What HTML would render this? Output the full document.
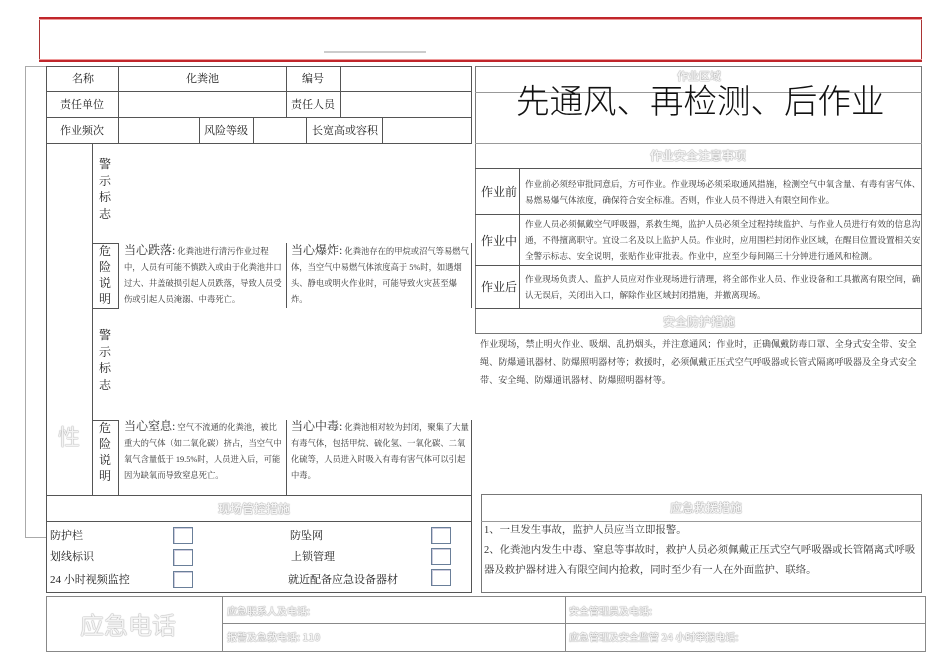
<!DOCTYPE html><html><head><meta charset="utf-8"><style>
*{margin:0;padding:0;box-sizing:border-box}
body{width:950px;height:672px;background:#fff;position:relative;overflow:hidden;font-family:"Liberation Serif","Noto Serif CJK SC",serif;color:#222}
.a{position:absolute}
.b{position:absolute;border:1px solid #555}
.h{position:absolute;background:#555;height:1px}
.v{position:absolute;background:#555;width:1px}
.t{position:absolute;font-size:11px;white-space:nowrap}
.em{position:absolute;color:#f4f4f4;text-shadow:0 0 1px #888,0 0 1px #aaa;font-family:"Noto Sans CJK SC",sans-serif;font-weight:bold;white-space:nowrap;font-size:12px}
.s{font-size:8.3px;line-height:16px;position:absolute;color:#333}
.cb{position:absolute;width:20px;height:17px;border:1px solid #6a7f99;box-shadow:inset 1px 1px 0 #ccd}
</style></head><body>
<div class="a" style="left:39px;top:17px;width:883px;height:45px;border-top:2px solid #c0262b;border-bottom:2px solid #c0262b;border-left:1px solid #a33;border-right:1px solid #a33"></div>
<div class="a" style="left:39px;top:19px;width:883px;height:1px;background:#e99"></div>
<div class="a" style="left:39px;top:59px;width:883px;height:1px;background:#e99"></div>
<div class="a" style="left:324px;top:51px;width:102px;height:2px;background:#ccc"></div>
<div class="a" style="left:25px;top:66px;width:21px;height:472px;border:1px solid #aaa;border-right:none"></div>
<div class="b" style="left:46px;top:66px;width:426px;height:78px"></div>
<div class="h" style="left:46px;top:91px;width:426px"></div>
<div class="h" style="left:46px;top:117px;width:426px"></div>
<div class="v" style="left:118px;top:66px;height:77px"></div>
<div class="v" style="left:286px;top:66px;height:51px"></div>
<div class="v" style="left:340px;top:66px;height:51px"></div>
<div class="v" style="left:199px;top:117px;height:26px"></div>
<div class="v" style="left:253px;top:117px;height:26px"></div>
<div class="v" style="left:306px;top:117px;height:26px"></div>
<div class="v" style="left:382px;top:117px;height:26px"></div>
<div class="t" style="left:72px;top:70px">名称</div>
<div class="t" style="left:186px;top:70px">化粪池</div>
<div class="t" style="left:302px;top:70px">编号</div>
<div class="t" style="left:60px;top:96px">责任单位</div>
<div class="t" style="left:291px;top:96px">责任人员</div>
<div class="t" style="left:60px;top:122px">作业频次</div>
<div class="t" style="left:204px;top:122px">风险等级</div>
<div class="t" style="left:312px;top:122px">长宽高或容积</div>
<div class="v" style="left:46px;top:143px;height:353px"></div>
<div class="v" style="left:92px;top:143px;height:353px"></div>
<div class="v" style="left:471px;top:243px;height:65px"></div>
<div class="v" style="left:471px;top:420px;height:76px"></div>
<div class="t" style="left:99px;top:156px;font-size:12px;line-height:16.5px;white-space:normal;width:14px">警示标志</div>
<div class="b" style="left:92px;top:243px;width:27px;height:66px"></div>
<div class="t" style="left:99px;top:243px;font-size:12px;line-height:16px;white-space:normal;width:14px">危险说明</div>
<div class="v" style="left:286px;top:243px;height:65px"></div>
<div class="s" style="left:124px;top:242px;width:160px"><span style="font-size:12px">当心跌落:</span> 化粪池进行清污作业过程中，人员有可能不慎跌入或由于化粪池井口过大、井盖破损引起人员跌落，导致人员受伤或引起人员淹溺、中毒死亡。</div>
<div class="s" style="left:291px;top:242px;width:178px"><span style="font-size:12px">当心爆炸:</span> 化粪池存在的甲烷或沼气等易燃气体，当空气中易燃气体浓度高于 5%时，如遇烟头、静电或明火作业时，可能导致火灾甚至爆炸。</div>
<div class="t" style="left:99px;top:327px;font-size:12px;line-height:16.5px;white-space:normal;width:14px">警示标志</div>
<div class="b" style="left:92px;top:420px;width:27px;height:76px"></div>
<div class="t" style="left:99px;top:420px;font-size:12px;line-height:16px;white-space:normal;width:14px">危险说明</div>
<div class="v" style="left:286px;top:420px;height:76px"></div>
<div class="s" style="left:124px;top:418px;width:160px"><span style="font-size:12px">当心窒息:</span> 空气不流通的化粪池，被比重大的气体（如二氧化碳）挤占，当空气中氧气含量低于 19.5%时，人员进入后，可能因为缺氧而导致窒息死亡。</div>
<div class="s" style="left:291px;top:418px;width:178px"><span style="font-size:12px">当心中毒:</span> 化粪池相对较为封闭，聚集了大量有毒气体，包括甲烷、硫化氢、一氧化碳、二氧化硫等，人员进入时吸入有毒有害气体可以引起中毒。</div>
<div class="em" style="left:58px;top:420px;font-size:22px;font-weight:normal">性</div>
<div class="b" style="left:46px;top:495px;width:426px;height:98px"></div>
<div class="h" style="left:46px;top:521px;width:426px"></div>
<div class="em" style="left:218px;top:500px">现场管控措施</div>
<div class="t" style="left:50px;top:527px">防护栏</div>
<div class="t" style="left:50px;top:548px">划线标识</div>
<div class="t" style="left:50px;top:571px">24 小时视频监控</div>
<div class="t" style="left:290px;top:527px">防坠网</div>
<div class="t" style="left:291px;top:548px">上锁管理</div>
<div class="t" style="left:288px;top:571px">就近配备应急设备器材</div>
<div class="cb" style="left:173px;top:527px"></div>
<div class="cb" style="left:173px;top:549px"></div>
<div class="cb" style="left:173px;top:571px"></div>
<div class="cb" style="left:431px;top:527px"></div>
<div class="cb" style="left:431px;top:548px"></div>
<div class="cb" style="left:431px;top:569px"></div>
<div class="b" style="left:475px;top:66px;width:447px;height:268px;border-color:#777"></div>
<div class="h" style="left:475px;top:92px;width:447px;background:#999"></div>
<div class="h" style="left:475px;top:143px;width:447px;background:#999"></div>
<div class="h" style="left:475px;top:168px;width:447px"></div>
<div class="h" style="left:475px;top:214px;width:447px"></div>
<div class="h" style="left:475px;top:265px;width:447px"></div>
<div class="h" style="left:475px;top:308px;width:447px"></div>
<div class="v" style="left:519px;top:168px;height:140px"></div>
<div class="em" style="left:677px;top:68px;font-size:11px">作业区域</div>
<div class="t" style="left:516px;top:74px;font-size:33.5px;font-family:'Noto Sans CJK SC',sans-serif;font-weight:300;color:#111">先通风、再检测、后作业</div>
<div class="em" style="left:650px;top:147px">作业安全注意事项</div>
<div class="t" style="left:481px;top:183px;font-size:12px">作业前</div>
<div class="t" style="left:481px;top:232px;font-size:12px">作业中</div>
<div class="t" style="left:481px;top:278px;font-size:12px">作业后</div>
<div class="s" style="left:525px;top:176px;width:397px;font-size:8.6px">作业前必须经审批同意后，方可作业。作业现场必须采取通风措施，检测空气中氧含量、有毒有害气体、易燃易爆气体浓度，确保符合安全标准。否则，作业人员不得进入有限空间作业。</div>
<div class="s" style="left:525px;top:216px;width:397px;font-size:8.6px">作业人员必须佩戴空气呼吸器，系救生绳，监护人员必须全过程持续监护、与作业人员进行有效的信息沟通，不得擅离职守。宜设二名及以上监护人员。作业时，应用围栏封闭作业区域，在醒目位置设置相关安全警示标志、安全说明，张贴作业审批表。作业中，应至少每间隔三十分钟进行通风和检测。</div>
<div class="s" style="left:525px;top:271px;width:397px;font-size:8.6px">作业现场负责人、监护人员应对作业现场进行清理，将全部作业人员、作业设备和工具撤离有限空间，确认无误后，关闭出入口，解除作业区域封闭措施，并撤离现场。</div>
<div class="em" style="left:663px;top:313px">安全防护措施</div>
<div class="s" style="left:480px;top:335px;width:446px;font-size:9.1px;line-height:18px">作业现场，禁止明火作业、吸烟、乱扔烟头，并注意通风；作业时，正确佩戴防毒口罩、全身式安全带、安全绳、防爆通讯器材、防爆照明器材等；救援时，必须佩戴正压式空气呼吸器或长管式隔离呼吸器及全身式安全带、安全绳、防爆通讯器材、防爆照明器材等。</div>
<div class="b" style="left:481px;top:494px;width:441px;height:99px;border-color:#777"></div>
<div class="h" style="left:481px;top:521px;width:441px;background:#999"></div>
<div class="em" style="left:670px;top:499px">应急救援措施</div>
<div class="s" style="left:484px;top:521px;width:438px;font-size:10.4px;line-height:20px">1、一旦发生事故，监护人员应当立即报警。<br>2、化粪池内发生中毒、窒息等事故时，救护人员必须佩戴正压式空气呼吸器或长管隔离式呼吸器及救护器材进入有限空间内抢救，同时至少有一人在外面监护、联络。</div>
<div class="b" style="left:46px;top:596px;width:880px;height:56px;border-color:#888"></div>
<div class="v" style="left:222px;top:596px;height:56px;background:#888"></div>
<div class="v" style="left:565px;top:596px;height:56px;background:#888"></div>
<div class="h" style="left:222px;top:623px;width:704px;background:#888"></div>
<div class="em" style="left:80px;top:606px;font-size:24px;font-weight:normal">应急电话</div>
<div class="em" style="left:227px;top:603px;font-size:10px">应急联系人及电话:</div>
<div class="em" style="left:569px;top:603px;font-size:10px">安全管理员及电话:</div>
<div class="em" style="left:227px;top:629px;font-size:10px">报警及急救电话: 110</div>
<div class="em" style="left:569px;top:629px;font-size:10px">应急管理及安全监管 24 小时举报电话:</div>
</body></html>
